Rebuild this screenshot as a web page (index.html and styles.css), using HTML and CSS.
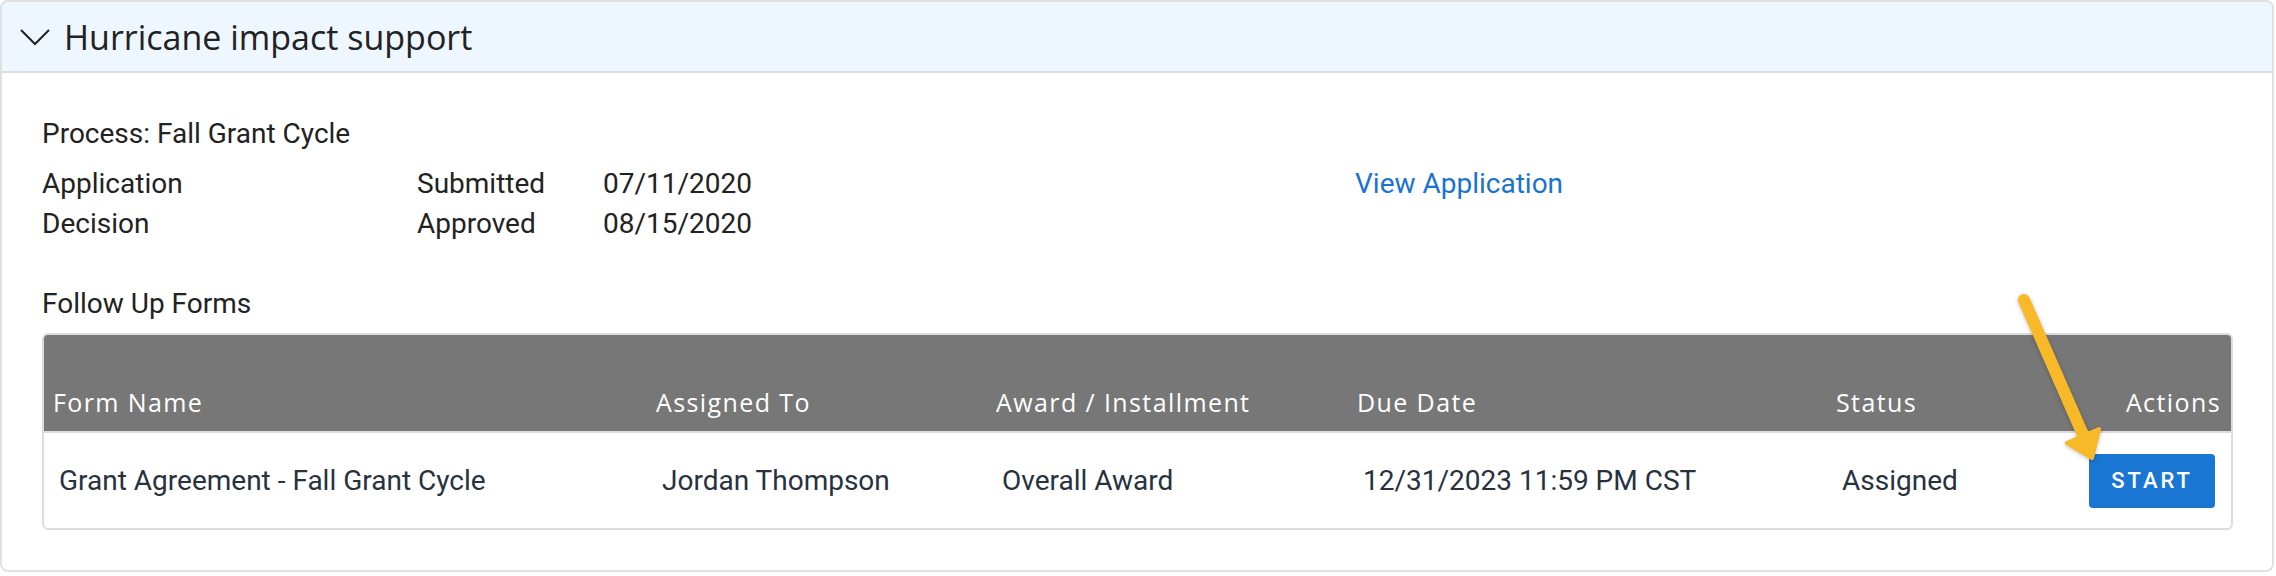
FILE: index.html
```html
<!DOCTYPE html>
<html lang="en">
<head>
    <meta charset="UTF-8">
    <meta name="viewport" content="width=device-width, initial-scale=1.0">
    <title>Hurricane impact support</title>
    <link rel="stylesheet" href="styles.css">
</head>
<body>
    <div class="card">
        <div class="card-header">
            <svg class="chevron" width="32" height="18" viewBox="0 0 32 18">
                <polyline points="2,2 16,16 30,2" fill="none" stroke="#222" stroke-width="2"/>
            </svg>
            <span class="card-title">Hurricane impact support</span>
        </div>

        <div class="card-body">
            <p class="process">Process: Fall Grant Cycle</p>

            <div class="info-grid">
                <span>Application</span>
                <span>Submitted</span>
                <span>07/11/2020</span>
                <a href="#" class="link">View Application</a>

                <span>Decision</span>
                <span>Approved</span>
                <span>08/15/2020</span>
                <span></span>
            </div>

            <p class="section-label">Follow Up Forms</p>

            <table class="forms-table">
                <colgroup>
                    <col style="width: 603px">
                    <col style="width: 340px">
                    <col style="width: 361px">
                    <col style="width: 479px">
                    <col>
                </colgroup>
                <thead>
                    <tr>
                        <th>Form Name</th>
                        <th>Assigned To</th>
                        <th>Award / Installment</th>
                        <th>Due Date</th>
                        <th class="actions">Status</th>
                    </tr>
                </thead>
                <tbody>
                    <tr>
                        <td>Grant Agreement - Fall Grant Cycle</td>
                        <td>Jordan Thompson</td>
                        <td>Overall Award</td>
                        <td>12/31/2023 11:59 PM CST</td>
                        <td class="actions">
                            <span>Assigned</span>
                            <button type="button" class="start-btn">START</button>
                        </td>
                    </tr>
                </tbody>
            </table>
        </div>

        <!-- annotation arrow pointing at the start button -->
        <svg class="pointer" width="120" height="185" viewBox="0 0 120 185">
            <line x1="22" y1="13" x2="82" y2="150" stroke="#f7b928" stroke-width="12" stroke-linecap="round"/>
            <polygon points="90,171 97,142 65,156" fill="#f7b928" stroke="#f7b928" stroke-width="4" stroke-linejoin="round"/>
        </svg>
    </div>
</body>
</html>
```

FILE: styles.css
```css
body {
    margin: 0;
    font-family: Roboto, "Liberation Sans", sans-serif;
    color: #222;
    background: #fff;
}

.card {
    position: relative;
    margin-right: 2px;
    height: 572px;
    box-sizing: border-box;
    border: 2px solid #e0e0e0;
    border-radius: 8px;
    overflow: hidden;
}

.card-header {
    display: flex;
    align-items: center;
    gap: 13px;
    height: 69px;
    padding-left: 17px;
    background-color: #eef6ff;
    border-bottom: 2px solid #dcdcdc;
}

.chevron {
    display: block;
}

.card-title {
    font-family: "Open Sans", sans-serif;
    font-size: 34px;
    color: #222;
}

.card-body {
    padding: 45px 39px 40px 40px;
}

.process,
.section-label {
    margin: 0;
    font-size: 28px;
    line-height: 32px;
}

.info-grid {
    display: grid;
    grid-template-columns: 375px 186px 752px auto;
    row-gap: 8px;
    margin-top: 18px;
    font-size: 28px;
    line-height: 32px;
}

.link {
    color: #1a73cf;
    text-decoration: none;
}

.section-label {
    margin-top: 48px;
    margin-bottom: 13px;
}

.forms-table {
    width: 100%;
    table-layout: fixed;
    border-collapse: separate;
    border-spacing: 0;
    border: 2px solid #dcdcdc;
    border-radius: 6px;
    overflow: hidden;
}

.forms-table th {
    height: 98px;
    box-sizing: border-box;
    padding: 0 10px 15px 9px;
    vertical-align: bottom;
    text-align: left;
    background-color: #777;
    border-bottom: 2px solid #dcdcdc;
    color: #fff;
    font-family: "Open Sans", sans-serif;
    font-weight: normal;
    font-size: 25px;
    letter-spacing: 1.4px;
    line-height: 28px;
}

.forms-table td {
    height: 95px;
    box-sizing: border-box;
    padding: 0 15px;
    vertical-align: middle;
    color: #28323f;
    font-size: 28px;
    line-height: 32px;
}

.forms-table th.actions {
    position: relative;
}

.forms-table th.actions::after {
    content: "Actions";
    position: absolute;
    right: 10px;
    bottom: 15px;
}

.forms-table td.actions {
    display: flex;
    align-items: center;
    justify-content: space-between;
    padding-right: 16px;
}

.start-btn {
    height: 54px;
    padding: 0 22px;
    border: none;
    border-radius: 4px;
    background-color: #1976d2;
    color: #fff;
    font-family: Roboto, sans-serif;
    font-weight: 500;
    font-size: 22px;
    letter-spacing: 3px;
    cursor: pointer;
}

.pointer {
    position: absolute;
    left: 2000px;
    top: 285px;
    filter: drop-shadow(0 1px 2px rgba(0, 0, 0, 0.25));
}
```
